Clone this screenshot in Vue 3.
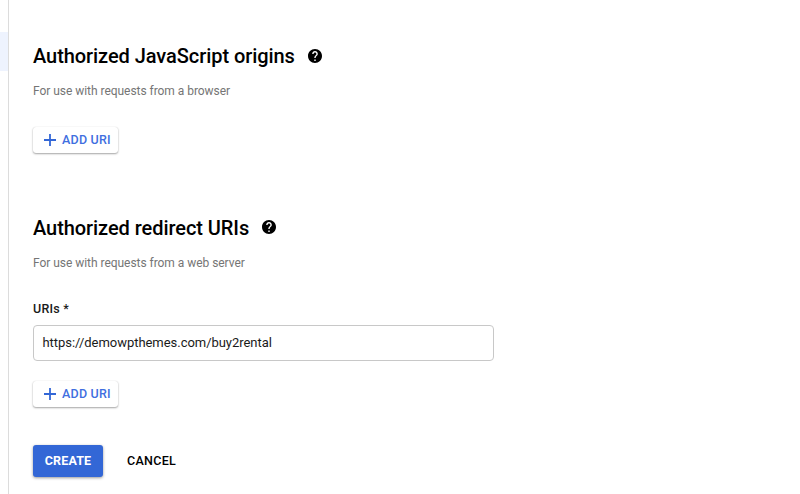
<script setup>
const sections = [
  { key: 'origins', title: 'Authorized JavaScript origins', hint: 'For use with requests from a browser' },
  { key: 'redirects', title: 'Authorized redirect URIs', hint: 'For use with requests from a web server', uri: 'https://demowpthemes.com/buy2rental' },
]
</script>

<template>
  <div class="page">
    <div class="rail"><div class="active"></div></div>
    <main>
      <section v-for="s in sections" :key="s.key" :class="s.key">
        <h2><span class="title">{{ s.title }}</span>
          <svg class="help" viewBox="2 2 20 20"><path d="M12 2C6.48 2 2 6.48 2 12s4.48 10 10 10 10-4.48 10-10S17.52 2 12 2zm1 17h-2v-2h2v2zm2.07-7.75l-.9.92C13.45 12.9 13 13.5 13 15h-2v-.5c0-1.1.45-2.1 1.17-2.83l1.24-1.26c.37-.36.59-.86.59-1.41 0-1.1-.9-2-2-2s-2 .9-2 2H8c0-2.21 1.79-4 4-4s4 1.79 4 4c0 .88-.36 1.68-.93 2.25z" /></svg>
        </h2>
        <p><span>{{ s.hint }}</span></p>
        <template v-if="s.uri">
          <label><span class="lab">URIs *</span></label>
          <div class="input"><span class="val">{{ s.uri }}</span></div>
        </template>
        <button class="add">
          <svg viewBox="0 0 12 12"><path d="M6 0v12M0 6h12" /></svg><span class="text">ADD URI</span>
        </button>
      </section>
      <footer>
        <button class="create"><span class="text">CREATE</span></button>
        <button class="cancel"><span class="text">CANCEL</span></button>
      </footer>
    </main>
  </div>
</template>

<style>
body { background: #fff; }
</style>
<style scoped>
.page { display: flex; height: 494px; overflow: hidden; font-family: Roboto, sans-serif; color: #1a1a1a; }
.rail { width: 8px; padding-top: 32px; box-sizing: border-box; }
.active { height: 39px; background: #eef3fe; }
main { flex: 1; border-left: 1px solid #dcdcdc; padding: 44px 0 0 24px; }
h2 { display: flex; align-items: center; gap: 13px; margin: 0; height: 24px; font-size: 20px; line-height: 24px; font-weight: 500; letter-spacing: -0.065px; color: #000; white-space: nowrap; }
.help { width: 14px; height: 14px; fill: #000; }
.redirects .help { margin-bottom: 2px; }
p { margin: 15px 0 0; height: 16px; font-size: 12px; line-height: 17px; letter-spacing: -0.04px; color: #757575; white-space: nowrap; }
button { display: flex; align-items: center; border: 0; font-family: inherit; background: #fff; font-size: 12.5px; font-weight: 500; white-space: nowrap; }
.text { padding-bottom: 2px; }
.add { width: 85px; height: 26px; margin-top: 28px; padding: 0 0 0 11px; gap: 6px; border-radius: 3px; letter-spacing: 0.22px; color: #3f6fe0; box-shadow: 0 0 1px rgba(0,0,0,.15), 0 1px 2px rgba(0,0,0,.35); }
.add svg { width: 12px; height: 12px; stroke: #3367d6; stroke-width: 1.8; fill: none; }
.redirects { margin-top: 63px; }
label { display: block; margin-top: 30px; height: 16px; font-size: 12.5px; line-height: 16px; font-weight: 500; letter-spacing: 0.2px; }
.input { box-sizing: border-box; width: 461px; height: 36px; margin-top: 8px; padding-left: 8.5px; border: 1px solid #c8c8c8; border-radius: 4px; font-size: 13px; line-height: 34px; letter-spacing: -0.04px; }
.redirects .add { margin-top: 20px; }
footer { display: flex; margin-top: 38px; }
.create { width: 70px; height: 32px; padding: 0; justify-content: center; border-radius: 3px; color: #fff; background: #3367d6; font-weight: 700; letter-spacing: 0.15px; box-shadow: 0 1px 3px rgba(0,0,0,.4); }
.cancel { padding: 0; margin-left: 24px; color: #000; letter-spacing: 0.3px; }
</style>
